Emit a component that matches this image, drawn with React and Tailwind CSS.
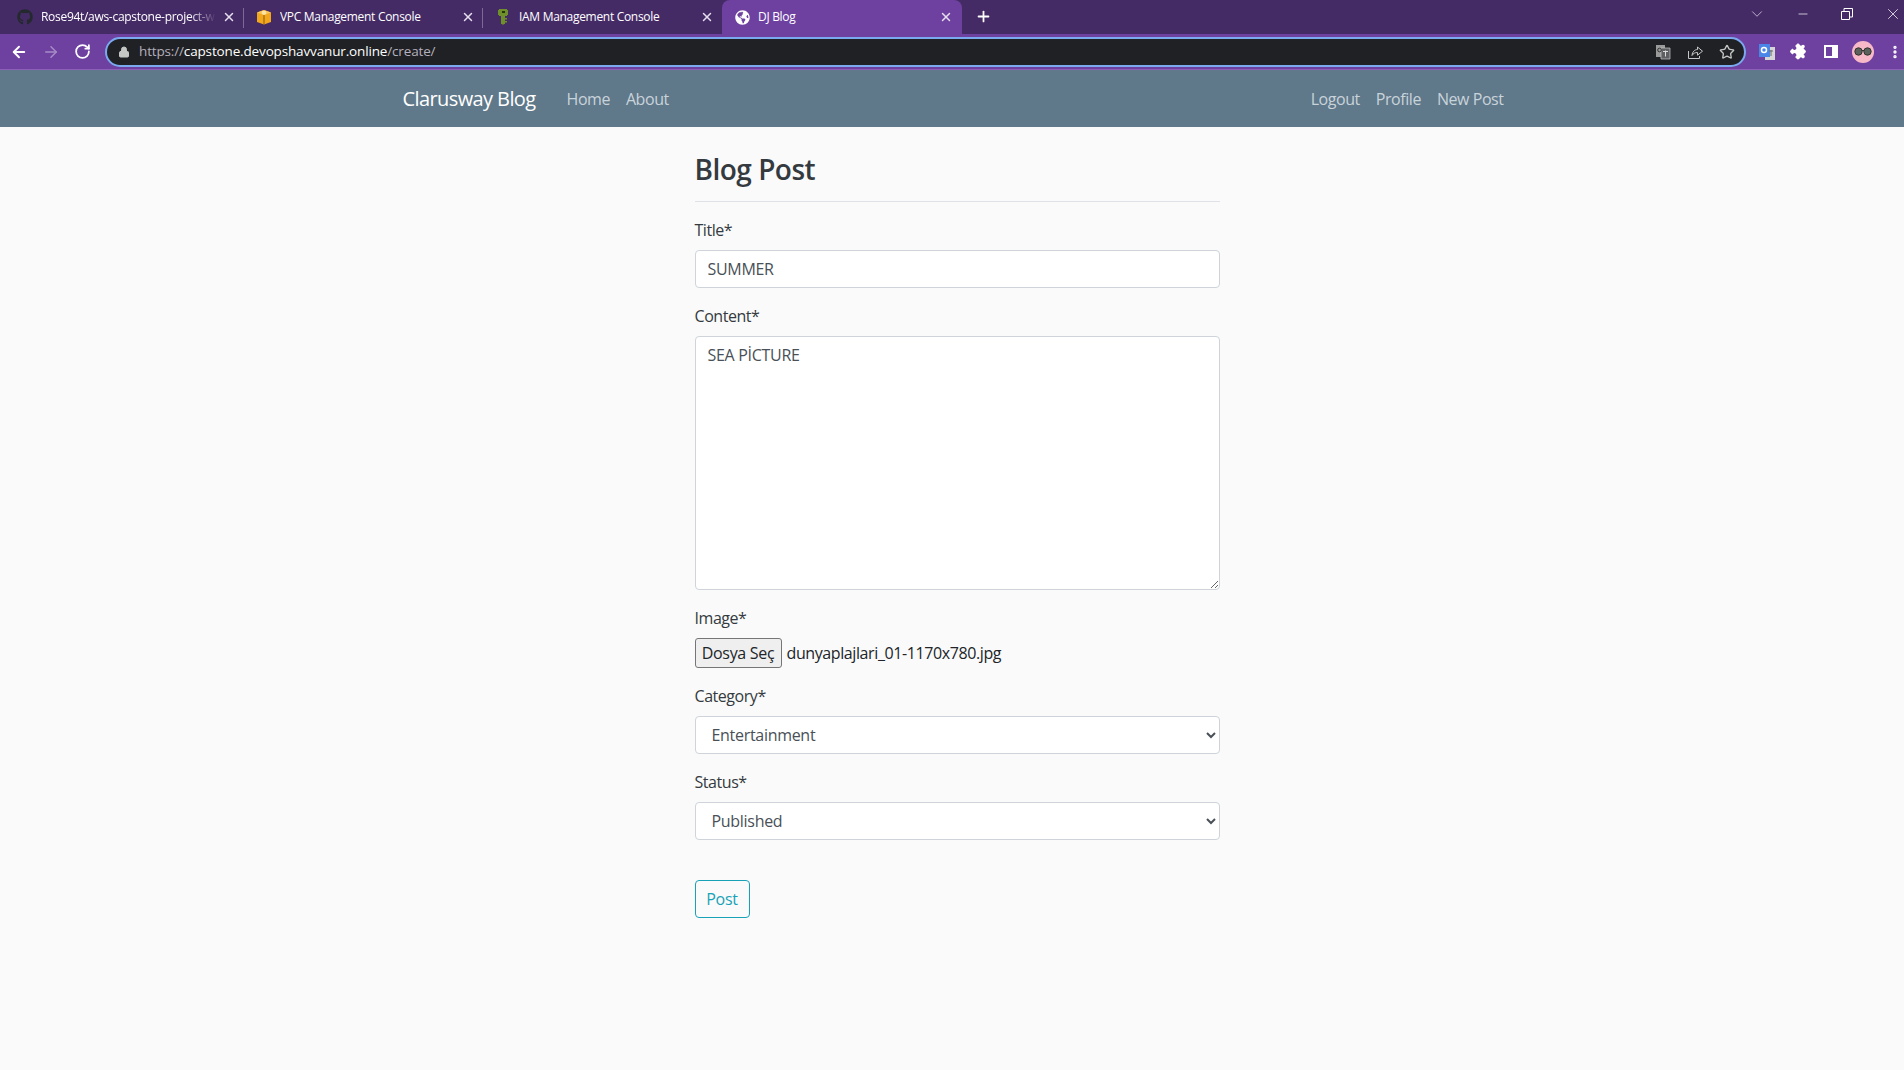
import { ArrowLeft, ArrowRight, RotateCw, Lock, X, Plus, ChevronDown, Minus, Star, MoreVertical } from "lucide-react";
import { FaGithub, FaGlobeAmericas } from "react-icons/fa";

const Tab = ({ icon, title, active, fade }) => (
    <div className={active ? "relative flex h-[34px] w-[240px] items-center rounded-t-lg bg-[#6e40a0] pl-3" : "relative flex h-[34px] w-[239px] items-center pl-3"}>
        <span className="flex w-4 shrink-0 justify-center">{icon}</span>
        <span className={fade ? "ml-2 w-[175px] overflow-hidden whitespace-nowrap text-xs text-white [mask-image:linear-gradient(to_right,black_85%,transparent)]" : "ml-2 w-[175px] overflow-hidden whitespace-nowrap text-xs text-white"}>{title}</span>
        <X size={14} className="ml-[6px] text-[#e6deef]" strokeWidth={2.5} />
        {!active && !title.startsWith("IAM") && <span className="absolute right-0 top-[8px] h-[20px] w-px bg-[#7c6a94]" />}
    </div>
);

const AwsIcon = () => (
    <svg width="16" height="16" viewBox="0 0 16 16">
        <path d="M8 1 15 3.500V13L8 15.500 1 13V3.500z" fill="#f2a71d" />
        <path d="M1 3.500 8 1l7 2.500L8 6z" fill="#f9c65a" />
        <path d="M6 2l4 0 0 3-2 1-2-1z" fill="#fde3a3" />
        <path d="M7.500 6h1v9.500h-1z" fill="#8a5a12" />
    </svg>
);

const KeyIcon = () => (
    <svg width="16" height="18" viewBox="0 0 16 18">
        <path d="M4 1h8v1h1v5h-1v1H10v8H9l-1 1-1-1H6V8H4V7H3V2h1z" fill="#6f8f2a" />
        <path d="M7 3h3v2H7z" fill="#26330f" />
        <path d="M10 10h2v1.500h-2zM10 13h2v1.500h-2z" fill="#6f8f2a" />
    </svg>
);

const Field = ({ label, children }) => (
    <div className="mb-4">
        <label className="mb-2 block h-6 text-base leading-6 tracking-[-0.45px] text-[#343a40]">{label}*</label>
        {children}
    </div>
);

const inputCls = "block h-[38px] w-full rounded border border-[#ced4da] bg-white px-3 text-base text-[#495057] outline-none";

export default function App() {
    return (
        <div className="flex min-h-[1070px] flex-col bg-[#fafafa] font-['Open_Sans','Noto_Sans',sans-serif] tracking-[-0.3px]">
            {/* browser chrome */}
            <div className="flex h-[34px] items-start bg-[#452b66] pl-[5px] text-white">
                <Tab icon={<FaGithub size={16} className="text-[#24292e]" />} title="Rose94t/aws-capstone-project-w" fade />
                <Tab icon={<AwsIcon />} title="VPC Management Console" />
                <Tab icon={<KeyIcon />} title="IAM Management Console" />
                <Tab icon={<FaGlobeAmericas size={15} className="text-white" />} title="DJ Blog" active />
                <Plus size={17} className="ml-[13px] mt-[8px]" strokeWidth={2.5} />
                <div className="ml-auto flex h-[28px] items-center gap-[30px] pr-[2px]">
                    <ChevronDown size={18} strokeWidth={1} className="text-[#e0d8ea]" />
                    <Minus size={14} strokeWidth={1.2} />
                    <svg width="12" height="12" viewBox="0 0 12 12" fill="none" stroke="white" className="ml-[1px] mr-[1px]"><path d="M.5 3.500h8v8h-8zM3 3.500V.5h8.500V9H8.500" /></svg>
                    <X size={18} strokeWidth={1} />
                </div>
            </div>
            <div className="flex h-[36px] items-center border-b border-[#8c5fb8] bg-[#6e40a0] text-white">
                <div className="flex w-[105px] shrink-0 items-center gap-[14px] pl-[10px]">
                    <ArrowLeft size={18} strokeWidth={2.5} />
                    <ArrowRight size={18} strokeWidth={2} className="text-[#a78cc6]" />
                    <RotateCw size={17} strokeWidth={2.5} />
                </div>
                <div className="flex h-[30px] w-[1641px] shrink-0 items-center rounded-full border-2 border-[#7aa9f0] bg-[#202124] pl-[11px] pr-px">
                    <Lock size={12} fill="#c4c7c5" className="text-[#c4c7c5]" />
                    <span className="ml-[9px] text-[13.500px] tracking-[-0.15px] text-[#b5b0bd]">https://<span className="text-white">capstone.devopshavvanur.online</span>/create/</span>
                    <div className="ml-auto flex items-center text-[#c4c7c5]">
                        <span className="flex w-8 justify-center">
                            <svg width="16" height="16" viewBox="0 0 16 16"><path d="M1 1h9v12H1z" fill="#9a9a9a" /><path d="M6 4h9v11H6z" fill="#5f6063" stroke="#c4c7c5" strokeWidth=".7" /><path d="M8 7.500h5M10.500 6.500v6" stroke="#dcdcdc" /><circle cx="4.500" cy="6" r="1.800" fill="none" stroke="#333" /></svg>
                        </span>
                        <span className="flex w-8 justify-center">
                            <svg width="16" height="16" viewBox="0 0 16 16" fill="none" stroke="#c4c7c5" strokeWidth="1"><path d="M1.500 7v7.500h11V12" /><path d="M5 11.500C5.300 7.500 8 5.500 10.500 5.500V3l5 4.200-5 4V8.500c-2.500 0-4.200.8-5.500 3z" /></svg>
                        </span>
                        <span className="flex w-8 justify-center"><Star size={16} strokeWidth={2} /></span>
                    </div>
                </div>
                <div className="ml-[5px] flex shrink-0 items-center">
                    <span className="flex w-8 justify-center">
                        <svg width="18" height="18" viewBox="0 0 18 18"><path d="M7 4h10v13H7z" fill="#d5d5d5" /><path d="M1 1h11v13H1z" fill="#4a86e8" /><circle cx="6" cy="7" r="2.500" fill="none" stroke="white" strokeWidth="1.500" /><path d="M11 8h4M13 7v6" stroke="#6a6a6a" /></svg>
                    </span>
                    <span className="flex w-8 justify-center">
                        <svg width="17" height="17" viewBox="0 0 24 24" fill="white" className="rotate-45"><path d="M20.500 11H19V7c0-1.100-.9-2-2-2h-4V3.500C13 2.120 11.880 1 10.500 1S8 2.120 8 3.500V5H4c-1.100 0-1.990.9-1.990 2v3.800H3.500c1.490 0 2.700 1.210 2.700 2.700s-1.210 2.700-2.700 2.700H2V20c0 1.100.9 2 2 2h3.800v-1.500c0-1.490 1.210-2.700 2.700-2.700 1.490 0 2.700 1.210 2.700 2.700V22H17c1.100 0 2-.9 2-2v-4h1.500c1.380 0 2.500-1.120 2.500-2.500S21.880 11 20.500 11z" /></svg>
                    </span>
                    <span className="flex w-8 justify-center">
                        <svg width="14" height="13" viewBox="0 0 14 13"><path d="M0 0h14v13H0z" fill="white" /><path d="M2 2h6v9H2z" fill="#6e40a0" /></svg>
                    </span>
                    <span className="flex w-8 justify-center">
                        <span className="flex h-[22px] w-[22px] items-center justify-center rounded-full bg-[#f7b9c8]">
                            <svg width="20" height="9" viewBox="0 0 20 9"><circle cx="5.500" cy="4.500" r="3.700" fill="#5a605c" stroke="#33322f" /><circle cx="14.500" cy="4.500" r="3.700" fill="#5a605c" stroke="#33322f" /><path d="M9 3.500h2" stroke="#33322f" /></svg>
                        </span>
                    </span>
                    <span className="ml-2 flex w-4 justify-center"><MoreVertical size={16} strokeWidth={3} /></span>
                </div>
            </div>

            {/* navbar */}
            <nav className="flex h-[57px] items-center bg-[#5f788a] pl-[9px]">
                <div className="mx-auto flex w-[1140px] items-center px-4 tracking-[-0.45px]">
                    <a className="mr-[31px] text-xl tracking-[-0.6px] text-white">Clarusway Blog</a>
                    <div className="flex gap-4 text-base text-[#c9d3da]">
                        <a>Home</a>
                        <a>About</a>
                    </div>
                    <div className="ml-auto flex gap-4 pr-[7px] text-base text-[#c9d3da]">
                        <a>Logout</a>
                        <a>Profile</a>
                        <a>New Post</a>
                    </div>
                </div>
            </nav>

            {/* form */}
            <div className="pl-[10px]">
                <div className="mx-auto w-[525px] pt-[21px]">
                    <h2 className="h-[54px] border-b border-[#dee2e6] text-[28px] font-semibold leading-[42px] tracking-[-0.5px] text-[#343a40]">Blog Post</h2>
                    <div className="h-[16px]" />
                    <Field label="Title">
                        <input className={inputCls} defaultValue="SUMMER" />
                    </Field>
                    <Field label="Content">
                        <textarea className="block h-[254px] w-full rounded border border-[#ced4da] bg-white px-3 py-[6px] text-base leading-6 text-[#495057] outline-none" defaultValue="SEA PİCTURE" />
                    </Field>
                    <Field label="Image">
                        <div className="flex h-[30px] items-center text-base text-[#212529]">
                            <button className="h-[30px] w-[87px] rounded-[3px] border border-[#767676] bg-[#efefef] text-base">Dosya Seç</button>
                            <span className="ml-[5px] tracking-[-0.4px]">dunyaplajlari_01-1170x780.jpg</span>
                        </div>
                    </Field>
                    <Field label="Category">
                        <select className={inputCls} defaultValue="Entertainment">
                            <option>Entertainment</option>
                        </select>
                    </Field>
                    <Field label="Status">
                        <select className={inputCls} defaultValue="Published">
                            <option>Published</option>
                        </select>
                    </Field>
                    <button className="mt-[24px] h-[38px] w-[55px] rounded border border-[#17a2b8] text-base text-[#17a2b8]">Post</button>
                </div>
            </div>
        </div>
    );
}
